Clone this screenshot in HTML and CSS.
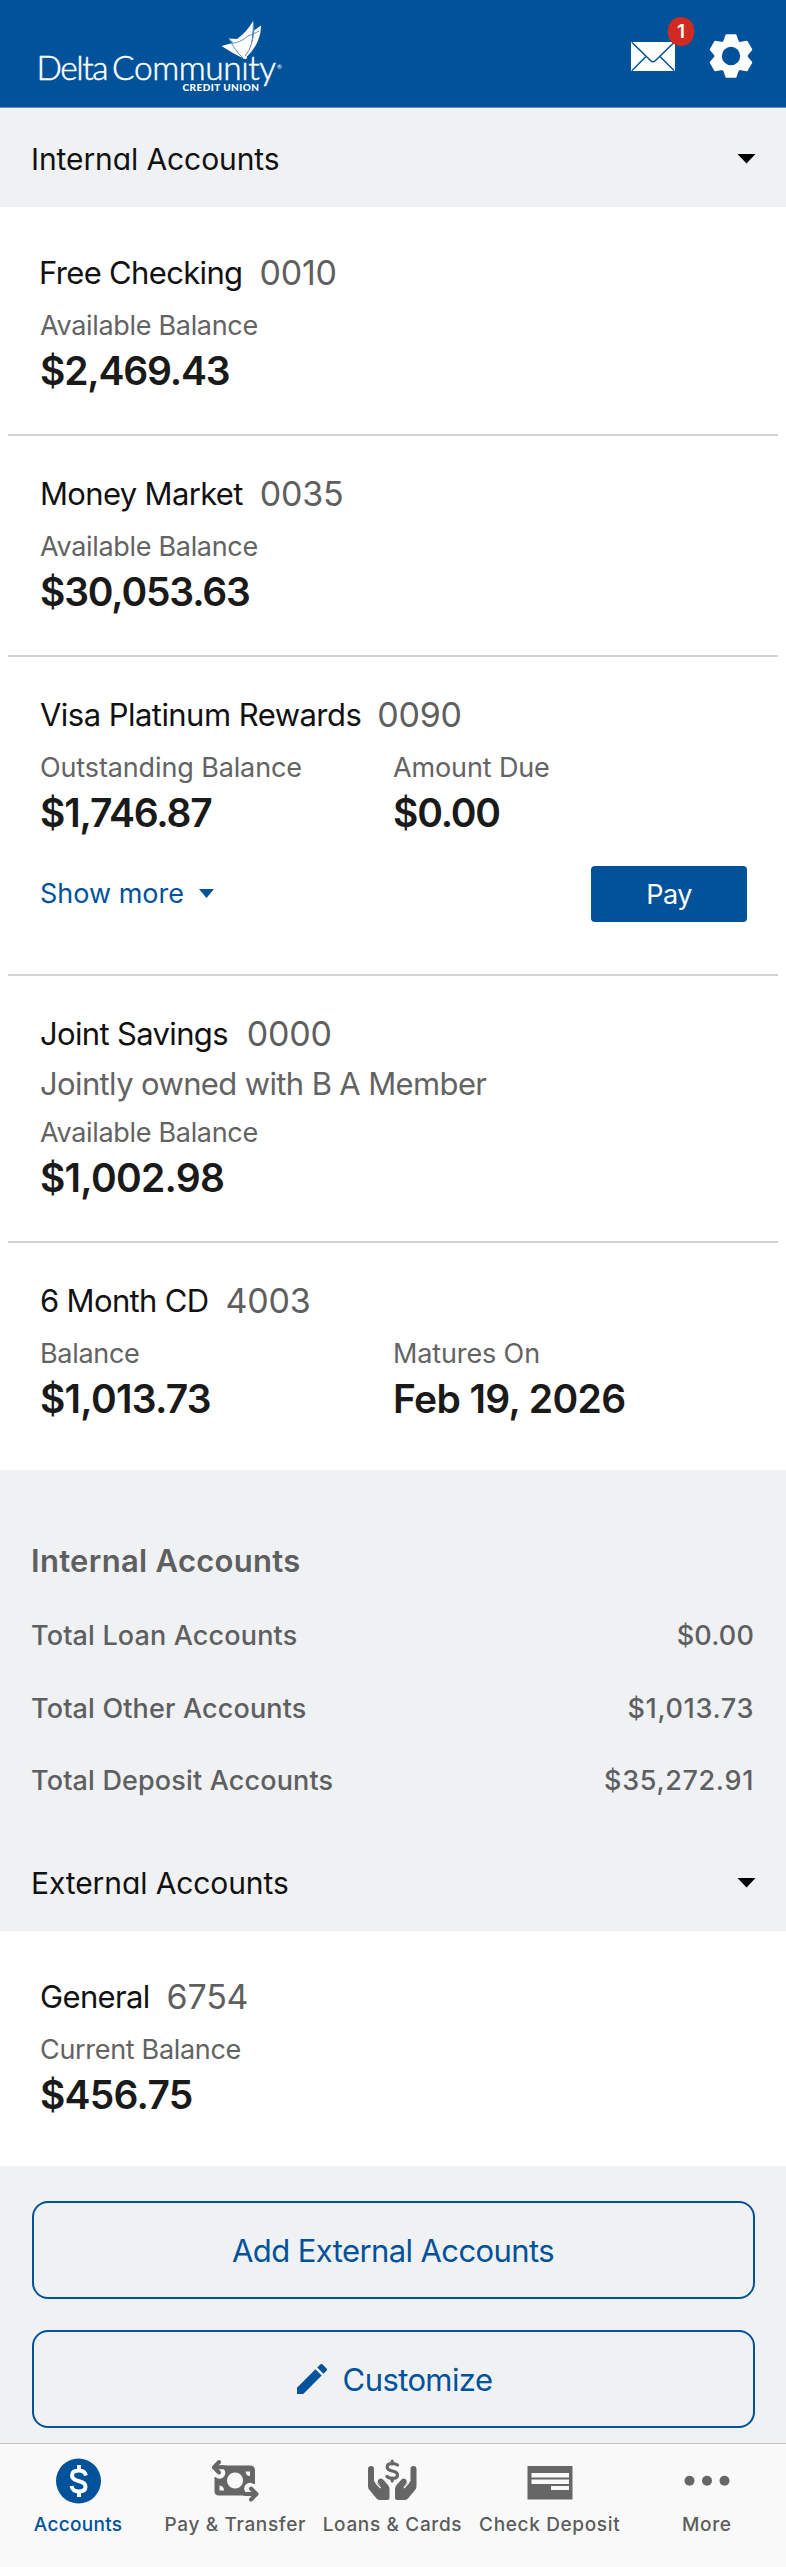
FILE: index.html
```html
<!DOCTYPE html>
<html lang="en">
<head>
<meta charset="utf-8">
<title>Delta Community Credit Union</title>
<link rel="stylesheet" href="styles.css">
</head>
<body>
<header class="topbar">
  <svg class="logo" width="250" height="80" viewBox="34 16 250 80" role="img" aria-label="Delta Community Credit Union">
    <g fill="#fff">
      <path d="M253 21Q253 39 249 54L243.500 58.500Q232 53 221.500 46L230.500 43.500L233 42.500L228.500 38.500L237 39Q247 32 253 21Z"/>
      <path d="M261 25.500Q261 44 245 58.500Q253 44 254 30.500Z"/>
    </g>
    <path d="M229 38Q234 50 243.500 58.500Q256 43 253.500 22M230.500 43.500Q240 43 248 36Q254 34 259 31" fill="none" stroke="#5f92c6" stroke-width="1"/>
    <g class="logo-name">
      <text x="36.500" y="79.500" textLength="72">Delta</text>
      <text x="112" y="79.500" textLength="164">Community</text>
    </g>
    <text class="logo-sub" x="182.500" y="91" textLength="76.500">CREDIT UNION</text>
    <text class="logo-reg" x="277" y="69">®</text>
  </svg>
  <div class="actions">
    <a class="mail" aria-label="Messages">
      <svg width="44" height="29" viewBox="0 0 44 29"><rect width="44" height="29" rx="1" fill="#fff"/><path d="M1 0.500L19.500 18.500Q22 21 24.500 18.500L43 0.500M1 28.500L15 14.500M43 28.500L29 14.500" fill="none" stroke="#00529b" stroke-width="1.500"/></svg>
      <span class="badge">1</span>
    </a>
    <a class="settings" aria-label="Settings">
      <svg width="44" height="44" viewBox="-22 -22 44 44"><g fill="#fff" stroke="#fff" stroke-width="2" stroke-linejoin="round"><circle r="15.500"/><path id="tooth" d="M-7 -14L-4.500 -20.800H4.500L7 -14V14L4.500 20.800H-4.500L-7 14Z"/><use href="#tooth" transform="rotate(60)"/><use href="#tooth" transform="rotate(120)"/></g><circle r="9.200" fill="#00529b"/></svg>
    </a>
  </div>
</header>
<main>
  <h2 class="section-head"><span>Internal Accounts</span><i class="caret"></i></h2>
  <section class="group">
    <article class="card">
      <h3 class="title"><span class="name checking">Free Checking</span><span class="num">0010</span></h3>
      <div class="fields"><div><p class="label">Available Balance</p><p class="amount">$2,469.43</p></div></div>
    </article>
    <article class="card">
      <h3 class="title"><span class="name">Money Market</span><span class="num">0035</span></h3>
      <div class="fields"><div><p class="label">Available Balance</p><p class="amount">$30,053.63</p></div></div>
    </article>
    <article class="card visa">
      <h3 class="title"><span class="name rewards">Visa Platinum Rewards</span><span class="num">0090</span></h3>
      <div class="fields">
        <div><p class="label wide">Outstanding Balance</p><p class="amount">$1,746.87</p></div>
        <div><p class="label wide">Amount Due</p><p class="amount">$0.00</p></div>
      </div>
      <div class="more-row"><a class="show-more">Show more<i class="caret small"></i></a><button class="pay">Pay</button></div>
    </article>
    <article class="card">
      <h3 class="title"><span class="name savings">Joint Savings</span><span class="num">0000</span></h3>
      <p class="owner">Jointly owned with B A Member</p>
      <div class="fields"><div><p class="label">Available Balance</p><p class="amount loose">$1,002.98</p></div></div>
    </article>
    <article class="card">
      <h3 class="title"><span class="name">6 Month CD</span><span class="num">4003</span></h3>
      <div class="fields">
        <div><p class="label">Balance</p><p class="amount loose">$1,013.73</p></div>
        <div><p class="label wide">Matures On</p><p class="amount date">Feb 19, 2026</p></div>
      </div>
    </article>
  </section>
  <section class="summary">
    <h3>Internal Accounts</h3>
    <div class="total"><span>Total Loan Accounts</span><span class="sum short">$0.00</span></div>
    <div class="total"><span>Total Other Accounts</span><span class="sum">$1,013.73</span></div>
    <div class="total"><span>Total Deposit Accounts</span><span class="sum">$35,272.91</span></div>
  </section>
  <h2 class="section-head"><span>External Accounts</span><i class="caret"></i></h2>
  <section class="group">
    <article class="card">
      <h3 class="title"><span class="name">General</span><span class="num">6754</span></h3>
      <div class="fields"><div><p class="label">Current Balance</p><p class="amount loose">$456.75</p></div></div>
    </article>
  </section>
  <div class="buttons">
    <button class="outline">Add External Accounts</button>
    <button class="outline customize"><svg width="30" height="30" viewBox="3 3 18 18"><path fill="#00529b" d="M3 17.250V21h3.750L17.810 9.940l-3.750-3.750L3 17.250zM20.710 7.040a1 1 0 0 0 0-1.410l-2.340-2.340a1 1 0 0 0-1.410 0l-1.830 1.830 3.750 3.750 1.830-1.830z"/></svg><span>Customize</span></button>
  </div>
</main>
<nav class="tabs">
  <a class="tab active">
    <svg width="48" height="48" viewBox="0 0 48 48"><circle cx="23.500" cy="24" r="22.500" fill="#00529b"/><path d="M24 8V14M24 34V40M31 18.500Q29.500 13.500 24 13.500Q17 13.500 17 18.500Q17 22.500 23.500 24Q30.500 25.500 30.500 29.800Q30.500 34.500 24 34.500Q17.500 34.500 16.500 29" fill="none" stroke="#fff" stroke-width="4"/></svg>
    <span>Accounts</span>
  </a>
  <a class="tab">
    <svg width="48" height="48" viewBox="212 2457 48 48">
      <path fill="#666" fill-rule="evenodd" d="M218 2465.500H250Q255 2465.500 255 2470.500V2491Q255 2495.500 250 2495.500H219Q214.500 2495.500 214.500 2491V2465.500ZM235 2472.500a8 8 0 1 0 .1 0ZM245.500 2471.500H250V2476Q246 2476 245.500 2471.500ZM219.500 2485.500V2490.500H224Q224 2486 219.500 2485.500Z"/>
      <g fill="#f9f9f9"><circle cx="219.500" cy="2473" r="5.800"/><circle cx="250" cy="2488.500" r="5.800"/><path d="M212 2464H216V2477H212ZM253 2484H258V2498H253Z"/></g>
      <path d="M219 2462L213.800 2467.300L219 2472.500M214 2467.300H224M251 2488.500L256.500 2494L251 2499.500M256 2494H245" fill="none" stroke="#666" stroke-width="4" stroke-linecap="round" stroke-linejoin="round"/>
    </svg>
    <span>Pay &amp; Transfer</span>
  </a>
  <a class="tab">
    <svg width="50" height="48" viewBox="368 2457 50 48">
      <g id="hand"><path fill="#666" d="M368 2469Q368 2466 371 2466Q374 2466 374 2469V2480L381.500 2487L378.500 2483.500Q376.800 2481 378.800 2479.300Q381 2477.500 383 2479.500L388 2485Q389.500 2487 389.500 2489V2498Q389.500 2500 387.500 2500H380Q378 2500 376.500 2498.500L369.500 2490Q368 2488.500 368 2486.500Z"/><path d="M374.500 2480Q376 2484 380.500 2488" fill="none" stroke="#f9f9f9" stroke-width="1.500"/></g>
      <use href="#hand" transform="matrix(-1 0 0 1 784.500 0)"/>
      <path d="M392.200 2461V2464M392.200 2478V2481M397.500 2465Q395.500 2463.500 392 2463.500Q387.200 2463.500 387.200 2467Q387.200 2470 392.300 2471Q397.500 2472 397.500 2475Q397.500 2478.500 392.500 2478.500Q389 2478.500 387 2476.500" fill="none" stroke="#666" stroke-width="3.200" stroke-linecap="round"/>
    </svg>
    <span>Loans &amp; Cards</span>
  </a>
  <a class="tab">
    <svg width="46" height="48" viewBox="0 0 46 48"><path fill="#666" d="M0.500 9H45.500V42.500H0.500Z"/><path fill="#f9f9f9" d="M4.500 16H42V20.500H4.500ZM4.500 22.500H42V27H4.500ZM24 29H42V33H24Z"/></svg>
    <span>Check Deposit</span>
  </a>
  <a class="tab">
    <svg width="46" height="48" viewBox="0 0 46 48" fill="#666"><circle cx="5.500" cy="23.700" r="5"/><circle cx="23" cy="23.700" r="5"/><circle cx="40.500" cy="23.700" r="5"/></svg>
    <span>More</span>
  </a>
</nav>
</body>
</html>
```
FILE: styles.css
```css
* { box-sizing: border-box; margin: 0; padding: 0; }
body { width: 786px; background: #f0f1f3; font-family: Inter, "Liberation Sans", sans-serif; color: #1a1a1a; }
h2, h3 { font-weight: 400; }
button { font-family: inherit; }
.topbar { height: 108px; padding: 16px 33px 0 34px; background: #00529b; border-bottom: 1px solid #5c8fc4; display: flex; justify-content: space-between; }
.logo { display: block; fill: #fff; }
.logo-name { font: 300 33.500px Lato, sans-serif; stroke: #fff; stroke-width: 0.500px; }
.logo-sub { font: 900 10px Lato, sans-serif; }
.logo-reg { font: 6px Lato, sans-serif; }
.actions { display: flex; align-items: flex-start; gap: 34px; }
.actions svg { display: block; }
.mail { position: relative; margin-top: 26px; }
.badge { position: absolute; left: 37px; top: -25px; width: 26px; height: 29px; border-radius: 13px; background: #d12a20; color: #fff; font-size: 19px; font-weight: 600; line-height: 30px; text-align: center; }
.settings { margin-top: 18px; }
.section-head { height: 99px; padding: 2px 30px 0 31px; display: flex; align-items: center; justify-content: space-between; font-size: 30px; font-weight: 400; letter-spacing: -0.100px; font-feature-settings: "cv11"; color: #111; }
.caret { width: 19px; height: 10px; background: #000; clip-path: polygon(0 0, 100% 0, 50% 100%); }
.caret.small { width: 15px; height: 9px; background: #00529b; margin-left: 15px; }
.group { padding: 8px 8px; background: #fff; }
.card { padding: 36px 31px 40px 32px; border-bottom: 2px solid #d3d3d5; }
.card:last-child { border-bottom: 0; }
.title { height: 43px; display: flex; align-items: center; gap: 17px; margin-bottom: 15px; }
.name { font-size: 31px; letter-spacing: -0.660px; color: #111; }
.rewards { letter-spacing: -0.540px; margin-right: -1px; }
.checking { margin-left: -1px; }
.savings { margin-right: 2px; }
.num { font-size: 34px; letter-spacing: -0.200px; color: #5f5f5f; }
.fields { display: grid; grid-template-columns: 353px 1fr; }
.label { font-size: 27px; line-height: 33px; letter-spacing: -0.320px; color: #636363; margin-bottom: 4.500px; }
.label.wide { letter-spacing: -0.130px; }
.amount { font-size: 39px; line-height: 48px; margin-bottom: -0.500px; font-weight: 600; letter-spacing: -1.180px; }
.amount.loose { letter-spacing: -0.750px; }
.amount.date { letter-spacing: -0.620px; }
.visa { padding-bottom: 52px; }
.more-row { margin-top: 30px; display: flex; align-items: center; justify-content: space-between; }
.show-more { display: flex; align-items: center; margin-top: -1px; font-size: 27px; color: #00529b; }
.pay { width: 156px; height: 56px; border: 0; border-radius: 4px; background: #00529b; color: #fff; font-size: 27px; letter-spacing: -0.500px; }
.owner { margin: -6px 0 12px; font-size: 31px; line-height: 40px; letter-spacing: -0.630px; color: #636363; }
.summary { padding: 69px 32px 15.500px 31px; color: #5e5f61; }
.summary h3 { font-size: 31px; line-height: 44px; font-weight: 600; letter-spacing: 0.300px; margin-bottom: 16.500px; }
.total { height: 72.500px; display: flex; align-items: center; justify-content: space-between; font-size: 27px; font-weight: 500; letter-spacing: 0.150px; }
.total:last-child { margin-bottom: -0.500px; }
.sum { letter-spacing: 0.650px; }
.sum.short { letter-spacing: 0.150px; }
.buttons { padding: 35px 31.500px 15px; display: grid; gap: 31px; }
.outline { height: 98px; display: flex; align-items: center; justify-content: center; gap: 16px; border: 2px solid #00529b; border-radius: 16px; background: transparent; color: #00529b; font-size: 31px; letter-spacing: -0.600px; }
.customize { padding-left: 3px; }
.tabs { height: 124px; display: grid; grid-template-columns: repeat(5, 1fr); background: #f9f9f9; border-top: 1px solid #c3c3c5; }
.tab { display: flex; flex-direction: column; align-items: center; padding-top: 13px; color: #5c5c5c; font-size: 19px; font-weight: 500; letter-spacing: 0.650px; white-space: nowrap; }
.tab span { line-height: 24px; margin: 8px 1px 0 0; }
.active { color: #00529b; letter-spacing: 0.300px; }
```
